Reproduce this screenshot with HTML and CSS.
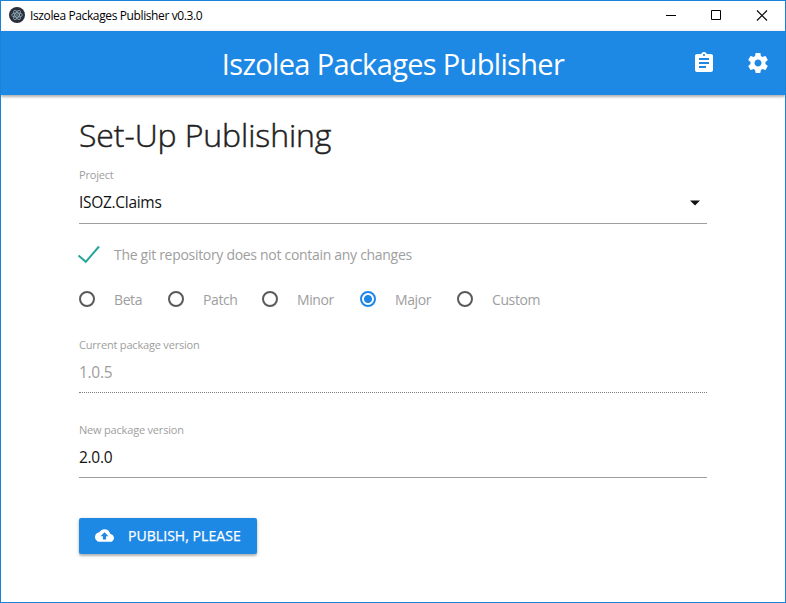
FILE: index.html
```html
<!DOCTYPE html>
<html lang="en">
<head>
<meta charset="utf-8">
<title>Iszolea Packages Publisher</title>
<link rel="stylesheet" href="styles.css">
</head>
<body>
<div class="window">
  <div class="titlebar">
    <svg class="app-icon" width="16" height="16" viewBox="0 0 16 16">
      <circle cx="8" cy="8" r="8" fill="#2b2e3a"/>
      <g fill="none" stroke="#9fc3cb" stroke-width=".7">
        <ellipse cx="8" cy="8" rx="5.3" ry="2.1"/>
        <ellipse cx="8" cy="8" rx="5.3" ry="2.1" transform="rotate(60 8 8)"/>
        <ellipse cx="8" cy="8" rx="5.3" ry="2.1" transform="rotate(120 8 8)"/>
      </g>
      <circle cx="8" cy="8" r=".8" fill="#9fc3cb"/>
    </svg>
    <span class="app-name">Iszolea Packages Publisher v0.3.0</span>
    <svg class="controls" width="120" height="30" viewBox="0 0 120 30" fill="none" stroke="#000">
      <path d="M1 14.500h10M46.500 9.500h9v9h-9z"/>
      <path d="M92 9.500l10 10M102 9.500l-10 10" stroke-width="1.100"/>
    </svg>
  </div>
  <header class="navbar">
    <h1 class="brand"><span>Iszolea Packages Publisher</span></h1>
    <nav class="actions">
      <svg width="24" height="24" viewBox="0 0 24 24" fill="#fff"><path d="M19 3h-4.180C14.400 1.840 13.300 1 12 1c-1.300 0-2.400.84-2.820 2H5c-1.100 0-2 .9-2 2v14c0 1.100.9 2 2 2h14c1.100 0 2-.9 2-2V5c0-1.100-.9-2-2-2zm-7 0c.55 0 1 .45 1 1s-.45 1-1 1-1-.45-1-1 .45-1 1-1zm2 14H7v-2h7v2zm3-4H7v-2h10v2zm0-4H7V7h10v2z"/></svg>
      <svg width="24" height="24" viewBox="0 0 24 24" fill="#fff"><path d="M19.430 12.980c.04-.32.07-.64.07-.98s-.03-.66-.07-.98l2.110-1.650c.19-.15.24-.42.12-.64l-2-3.460c-.12-.22-.39-.3-.61-.22l-2.490 1c-.52-.4-1.080-.73-1.690-.98l-.38-2.650C14.460 2.180 14.250 2 14 2h-4c-.25 0-.46.18-.49.42l-.38 2.650c-.61.25-1.170.59-1.690.98l-2.490-1c-.23-.09-.49 0-.61.22l-2 3.460c-.13.22-.07.49.12.64l2.110 1.650c-.04.32-.07.65-.07.98s.03.66.07.98l-2.110 1.650c-.19.15-.24.42-.12.64l2 3.460c.12.22.39.3.61.22l2.490-1c.52.4 1.080.73 1.690.98l.38 2.650c.03.24.24.42.49.42h4c.25 0 .46-.18.49-.42l.38-2.650c.61-.25 1.170-.59 1.690-.98l2.490 1c.23.09.49 0 .61-.22l2-3.460c.12-.22.07-.49-.12-.64l-2.110-1.650zM12 15.500c-1.930 0-3.500-1.570-3.500-3.500s1.570-3.500 3.500-3.500 3.500 1.570 3.500 3.500-1.570 3.500-3.500 3.500z"/></svg>
    </nav>
  </header>
  <main class="content">
    <h2 class="heading"><span>Set-Up Publishing</span></h2>
    <div class="field">
      <div class="label"><span>Project</span></div>
      <div class="value select"><span>ISOZ.Claims</span>
        <svg width="24" height="24" viewBox="0 0 24 24"><path d="M7 10.500l5 5 5-5z" fill="#111"/></svg>
      </div>
    </div>
    <div class="status">
      <svg width="24" height="24" viewBox="0 0 24 24" fill="none" stroke="#26a69a" stroke-width="2"><path d="M-.5 12.500l7.300 6.300L20 3.500"/></svg>
      <span>The git repository does not contain any changes</span>
    </div>
    <div class="radios">
      <div class="radio beta"><i class="dot"></i><span>Beta</span></div>
      <div class="radio patch"><i class="dot"></i><span>Patch</span></div>
      <div class="radio minor"><i class="dot"></i><span>Minor</span></div>
      <div class="radio major"><i class="dot checked"></i><span>Major</span></div>
      <div class="radio custom"><i class="dot"></i><span>Custom</span></div>
    </div>
    <div class="field disabled">
      <div class="label"><span>Current package version</span></div>
      <div class="value"><span>1.0.5</span></div>
    </div>
    <div class="field last">
      <div class="label"><span>New package version</span></div>
      <div class="value"><span>2.0.0</span></div>
    </div>
    <div class="publish">
      <svg width="19" height="19" viewBox="0 0 24 24" fill="#fff"><path d="M19.350 10.040C18.670 6.590 15.640 4 12 4 9.110 4 6.600 5.640 5.350 8.040 2.340 8.360 0 10.910 0 14c0 3.310 2.690 6 6 6h13c2.760 0 5-2.240 5-5 0-2.640-2.050-4.780-4.650-4.960zM14 13v4h-4v-4H7l5-5 5 5h-3z"/></svg>
      <span>PUBLISH, PLEASE</span>
    </div>
  </main>
</div>
</body>
</html>
```
FILE: styles.css
```css
* { box-sizing: border-box; }
body { margin: 0; font-family: "Open Sans", "Noto Sans", sans-serif; background: #fff; }
h1, h2 { margin: 0; font-weight: 400; }
span { white-space: nowrap; }
svg { display: block; flex: none; overflow: visible; }
.window { width: 786px; height: 603px; border: 1px solid #1c82d6; overflow: hidden; }
.titlebar { height: 30px; display: flex; align-items: center; padding-left: 8px; }
.app-icon { margin-top: -2px; }
.app-name { margin-left: 5px; flex: 1; font-size: 12px; line-height: 28px; letter-spacing: -.38px; color: #000; }
.navbar { height: 64px; background: #1e88e5; color: #fff; display: grid; grid-template-columns: 1fr auto 1fr; align-items: center; box-shadow: 0 2px 2px rgba(0,0,0,.2), 0 1px 4px rgba(0,0,0,.18); }
.brand { grid-column: 2; font-size: 29px; line-height: 64px; padding-top: 1px; letter-spacing: -.67px; }
.actions { display: flex; gap: 30px; justify-content: flex-end; padding: 0 15px 2px 0; }
.content { width: 628px; margin: 0 auto; }
.heading { height: 71px; padding: 19px 0 0 0; font-size: 32px; line-height: 41px; font-weight: 300; letter-spacing: -.1px; color: #212121; -webkit-text-stroke: .45px #212121; }
.field { height: 58px; border-bottom: 1px solid #9e9e9e; color: #111; }
.label { height: 18px; font-size: 11px; line-height: 18px; letter-spacing: -.19px; color: #9e9e9e; }
.value { height: 36px; font-size: 15.500px; line-height: 37px; letter-spacing: -.3px; }
.select { display: flex; justify-content: space-between; align-items: center; }
.status { display: flex; height: 24px; align-items: center; gap: 11px; margin-top: 19px; color: #9e9e9e; font-size: 14px; letter-spacing: -.3px; }
.radios { display: flex; height: 24px; align-items: center; margin-top: 20px; color: #9e9e9e; font-size: 14px; letter-spacing: -.4px; }
.status span { line-height: 24px; }
.radio { display: flex; align-items: center; gap: 19px; }
.dot { width: 16px; height: 16px; border: 2px solid #5a5a5a; border-radius: 50%; }
.checked { border-color: #1e88e5; background: radial-gradient(circle, #1e88e5 3.600px, transparent 4.400px); }
.beta { width: 89px; }
.patch { width: 94px; }
.minor { width: 98px; }
.major { width: 97px; }
.disabled { height: 57px; margin-top: 25px; border-bottom: 1px dotted #808080; color: #9e9e9e; }
.last { height: 57px; margin-top: 28px; }
.publish { width: 178px; height: 36px; margin-top: 40px; padding: 0 0 1px 16px; display: flex; align-items: center; gap: 14px; background: #1e88e5; color: #fff; border-radius: 2px; font-size: 14px; letter-spacing: .05px; -webkit-text-stroke: .25px #fff; box-shadow: 0 2px 2px rgba(0,0,0,.2), 0 1px 4px rgba(0,0,0,.18); }
```
